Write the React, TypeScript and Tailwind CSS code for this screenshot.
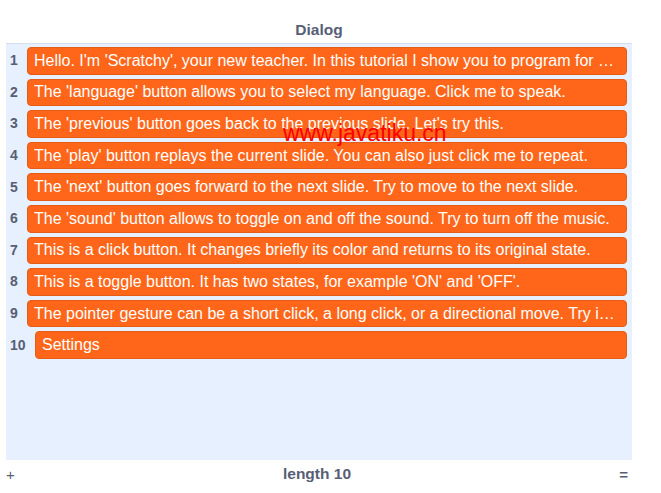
import React from 'react';

const items = [
  "Hello. I'm 'Scratchy', your new teacher. In this tutorial I show you to program for the web.",
  "The 'language' button allows you to select my language. Click me to speak.",
  "The 'previous' button goes back to the previous slide. Let's try this.",
  "The 'play' button replays the current slide. You can also just click me to repeat.",
  "The 'next' button goes forward to the next slide. Try to move to the next slide.",
  "The 'sound' button allows to toggle on and off the sound. Try to turn off the music.",
  'This is a click button. It changes briefly its color and returns to its original state.',
  "This is a toggle button. It has two states, for example 'ON' and 'OFF'.",
  'The pointer gesture can be a short click, a long click, or a directional move. Try it out here.',
  'Settings',
];

export default function App() {
  return (
    <div className="relative w-[661px] h-[493px] bg-white font-['Liberation_Sans',Arial,sans-serif]">
      <div className="w-[626px] ml-[6px]">
        {/* Titel */}
        <div className="h-[43px] pt-[20px] text-center text-[15.5px] font-bold text-[#575e75] leading-[20px]">
          Dialog
        </div>

        {/* Liste */}
        <div className="h-[417px] bg-[#e6f0ff] border-t border-[#d6dfec] pt-[3px] pr-[5px] flex flex-col gap-[4px]">
          {items.map((text, i) => (
            <div key={i} className="flex items-center h-[27.6px]">
              <span
                className={`shrink-0 text-[14px] font-bold text-[#575e75] text-left pl-[4px] ${
                  i === 9 ? 'w-[29px]' : 'w-[21px]'
                }`}
              >
                {i + 1}
              </span>
              <div className="flex-1 min-w-0 h-full flex items-center rounded-[4px] bg-[#ff661a] border border-[#e55c17] pl-[6px] pr-[8px] text-[16px] text-white">
                <span className="truncate">{text}</span>
              </div>
            </div>
          ))}
        </div>

        {/* Fußzeile */}
        <div className="flex items-center justify-between pr-[4px] h-[28px] text-[#575e75]">
          <span className="text-[15px] leading-none">+</span>
          <span className="text-[15.5px] font-bold">length 10</span>
          <span className="text-[15px] font-bold leading-none">=</span>
        </div>
      </div>

      {/* Wasserzeichen */}
      <div className="absolute left-[283px] top-[122px] text-[23px] text-[#f00] font-['Liberation_Sans',sans-serif] font-light leading-none pointer-events-none">
        www.javatiku.cn
      </div>
    </div>
  );
}
